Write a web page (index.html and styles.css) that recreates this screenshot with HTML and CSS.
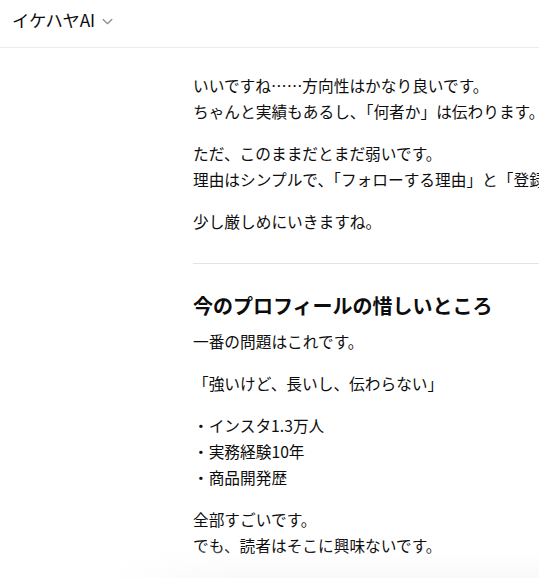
FILE: index.html
```html
<!DOCTYPE html>
<html lang="ja">
<head>
<meta charset="utf-8">
<link rel="stylesheet" href="styles.css">
</head>
<body>
<header class="topbar">
  <div class="model">
    <span class="model-name">イケハヤAI</span>
    <svg class="chev" width="13" height="13" viewBox="0 0 12 12" aria-hidden="true"><path d="M2 4.2 L6 8 L10 4.2" fill="none" stroke="#8e8e8e" stroke-width="1.2" stroke-linecap="round" stroke-linejoin="round"/></svg>
  </div>
</header>
<main class="thread">
  <article class="message">
    <p>いいですね……方向性はかなり良いです。<br>ちゃんと実績もあるし、「何者か」は伝わります。</p>
    <p>ただ、このままだとまだ弱いです。<br>理由はシンプルで、「フォローする理由」と「登録する理由」がまだ見えないからです。</p>
    <p>少し厳しめにいきますね。</p>
    <hr class="rule">
    <h3 class="heading">今のプロフィールの惜しいところ</h3>
    <p class="after-heading">一番の問題はこれです。</p>
    <p>「強いけど、長いし、伝わらない」</p>
    <p>・インスタ1.3万人<br>・実務経験10年<br>・商品開発歴</p>
    <p>全部すごいです。<br>でも、読者はそこに興味ないです。</p>
  </article>
</main>
<div class="fade"></div>
</body>
</html>
```
FILE: styles.css
```css
html, body {
  margin: 0;
  padding: 0;
  background: #ffffff;
  overflow: hidden;
  height: 100%;
}
body {
  font-family: "Noto Sans CJK JP", "Noto Sans", sans-serif;
  color: #0d0d0d;
  position: relative;
}
.topbar {
  height: 47px;
  border-bottom: 1px solid #ececec;
  display: flex;
  align-items: center;
  padding-left: 12px;
}
.model {
  display: flex;
  align-items: center;
  gap: 6px;
  margin-top: -7px;
}
.model-name {
  font-size: 17.3px;
  line-height: 24px;
  letter-spacing: -0.2px;
}
.chev {
  margin-top: 2px;
}
.thread {
  padding-left: 193px;
  padding-top: 25px;
  width: 700px;
}
.message p {
  margin: 0 0 16px 0;
  font-size: 15.7px;
  line-height: 26px;
  white-space: nowrap;
}
.rule {
  border: 0;
  border-top: 1px solid #e3e3e3;
  margin: 28px 0 27px 0;
  height: 0;
}
.heading {
  margin: 0 0 8px 0;
  font-size: 20px;
  line-height: 30px;
  font-weight: 700;
  white-space: nowrap;
}
.fade {
  position: absolute;
  left: 0;
  right: 0;
  bottom: 0;
  height: 28px;
  background: linear-gradient(to right, rgba(255,255,255,1) 20%, rgba(255,255,255,0) 45%),
              linear-gradient(to bottom, rgba(250,250,250,0), rgba(249,249,249,1));
  pointer-events: none;
}
```
